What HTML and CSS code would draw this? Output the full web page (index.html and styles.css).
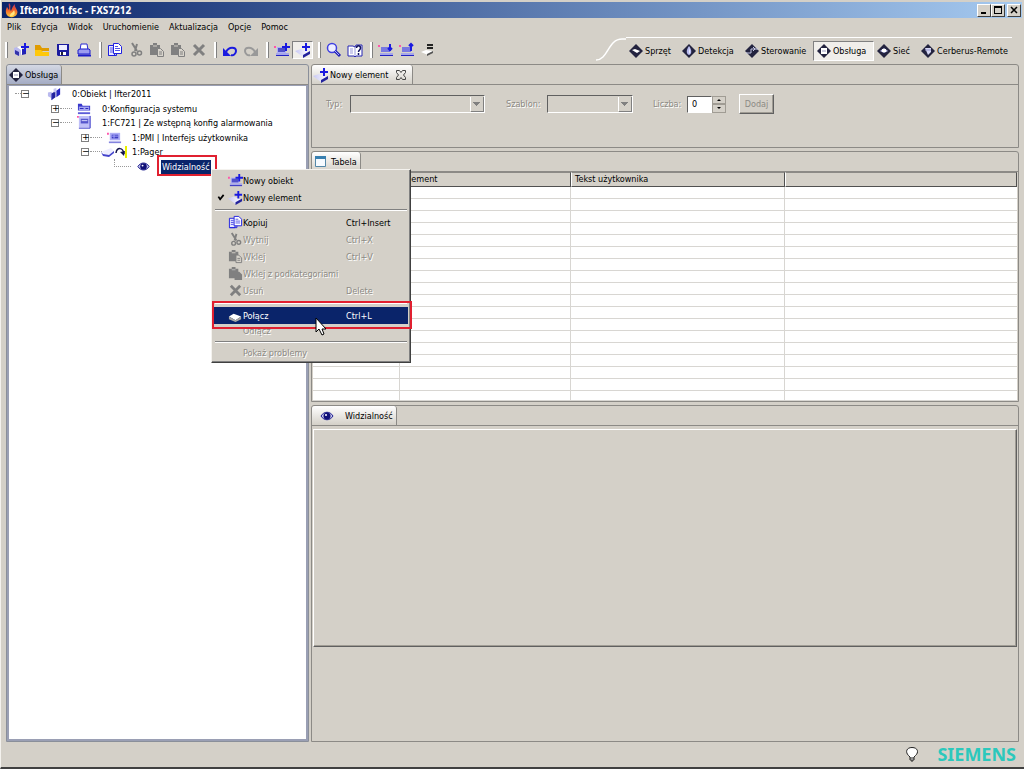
FILE: index.html
```html
<!DOCTYPE html>
<html lang="pl">
<head>
<meta charset="utf-8">
<title>Ifter2011.fsc - FXS7212</title>
<link rel="stylesheet" href="styles.css">
</head>
<body>
<svg class="defs" aria-hidden="true">
  <defs>
    <linearGradient id="flame" x1="0" y1="0" x2="0" y2="1"><stop offset="0" stop-color="#b0306a"/><stop offset=".5" stop-color="#f0602a"/><stop offset="1" stop-color="#ffd23a"/></linearGradient>
    <linearGradient id="slab" x1="0" y1="0" x2="1" y2="0"><stop offset="0" stop-color="#c6c6f4"/><stop offset="1" stop-color="#fff"/></linearGradient>
  </defs>
  <symbol id="app" viewBox="0 0 16 16"><path d="M5 1c3 3 0 5 2 8 1-2 1-4 4-7-1 4 4 6 2 10-2 4-8 4-10 1S2 7 3 5c1 1 1 2 2 3 1-3-1-4 0-7z" fill="url(#flame)"/><path d="M6 14c0-3 3-3 4-6 2 4 0 6-4 6z" fill="#ffe680"/></symbol>
  <symbol id="new" viewBox="0 0 16 16"><path d="M1 6l3-1 4 3v5l-3 1-4-3z" fill="#b9b9ee"/><path d="M4 5l3-1 2 2v6l-1 1V8z" fill="#fff"/><path d="M2 8l4 2v4l-4-2z" fill="#33a"/><path d="M9 7l4 0v5l-4 1z" fill="#2222b4"/><path d="M12 1v8M8 5h8" stroke="#1a1ae0" stroke-width="2"/></symbol>
  <symbol id="cubes" viewBox="0 0 16 16"><path d="M1 7l4-1v7l-4-2z" fill="#b9b9ee"/><path d="M5 8l4-3v7l-4 3z" fill="#20209c"/><path d="M7 3l3-1v4l-3 1z" fill="#c8c8f2"/><path d="M10 5l4-3v7l-4 3z" fill="#2525c0"/><path d="M5 8v7" stroke="#55c"/></symbol>
  <symbol id="open" viewBox="0 0 16 16"><path d="M1 3h5l2 3h7v3H1z" fill="#e09c00"/><path d="M1 8h6l2 2h6v4H1z" fill="#ffc80a"/></symbol>
  <symbol id="save" viewBox="0 0 16 16"><path d="M2 2h12v12H3l-1-1z" fill="#1c1c9e"/><path d="M4 3h8v5H4z" fill="#eef"/><path d="M5 10h6v3H5z" fill="#fff"/><path d="M6 10h2v3H6z" fill="#223"/></symbol>
  <symbol id="print" viewBox="0 0 16 16"><path d="M5 2h6l1 6H4z" fill="#fff" stroke="#2b2bd4"/><path d="M2 8l2-1h9l1 1v4H2z" fill="#9c9cf0" stroke="#1d1dcc"/><path d="M2 13.500h13" stroke="#1d1dcc" stroke-width="2"/></symbol>
  <symbol id="copy" viewBox="0 0 16 16"><path d="M1.500 3.500h6v10h-6z" fill="#e8e8ff" stroke="#2020e0"/><path d="M3 6h3M3 8h3M3 10h3" stroke="#5555e8"/><path d="M6.500 1.500h5l3 3v7h-8z" fill="#fff" stroke="#2020e0"/><path d="M8 4.500h3M8 6.500h5M8 8.500h5" stroke="#5555e8"/><path d="M1.500 13.500h8v-2" fill="none" stroke="#2020e0"/></symbol>
  <symbol id="cut" viewBox="0 0 16 16"><path d="M4 1l5 8M9 2L7 9" stroke="#808080" stroke-width="2"/><circle cx="6" cy="12" r="2" fill="none" stroke="#808080" stroke-width="1.500"/><circle cx="11.500" cy="11" r="2" fill="none" stroke="#808080" stroke-width="1.500"/></symbol>
  <symbol id="paste" viewBox="0 0 16 16"><path d="M1 3h3V1h4v2h3v10H1z" fill="#808080"/><path d="M4 4h4" stroke="#d4d0c8"/><path d="M8.500 6.500h3l3 3v5h-6z" fill="#d8d4cc" stroke="#808080"/><path d="M10 10h3M10 12h3" stroke="#808080"/></symbol>
  <symbol id="pastesub" viewBox="0 0 16 16"><path d="M1 3h3V1h4v2h3v3h1l3 3v6H7v-2H1z" fill="#808080"/><path d="M4 4h4" stroke="#bbb"/></symbol>
  <symbol id="del" viewBox="0 0 16 16"><path d="M3 3l10 10M13 3L3 13" stroke="#808080" stroke-width="3"/></symbol>
  <symbol id="undo" viewBox="0 0 16 16"><path d="M4 10c3-6 10-5 10-1 0 3-3 5-5 4" fill="none" stroke="#1a1ae0" stroke-width="2"/><path d="M1 6v8h8z" fill="#1a1ae0"/></symbol>
  <symbol id="redo" viewBox="0 0 16 16"><path d="M12 10C9 4 2 5 2 9c0 3 3 5 5 4" fill="none" stroke="#999" stroke-width="2"/><path d="M15 6v8H7z" fill="#999"/></symbol>
  <symbol id="screen" viewBox="0 0 16 16"><path d="M0 3h2v2H0z" fill="#f5a"/><path d="M3 3h11v8H3z" fill="#aeaef6"/><path d="M5 5h7v4H5z" fill="#3c3cc0"/><path d="M5 6.500h7M7.500 5v4" stroke="#aaf"/><path d="M2 12h13v1H2z" fill="#a7a7e8"/><path d="M2 13h13v1H2z" fill="#6a6ad8"/></symbol>
  <symbol id="newobj" viewBox="0 0 16 16"><path d="M0 4h2v2H0z" fill="#f5a"/><path d="M3 5h9v6H3z" fill="#aeaef6"/><path d="M4 6h7v4H4z" fill="#5050c8"/><path d="M2 11h13v2H2z" fill="#a7a7e8"/><path d="M2 13h13v1H2z" fill="#2222c4"/><path d="M12 1v8M8 5h8" stroke="#1a1ae0" stroke-width="2"/></symbol>
  <symbol id="newel" viewBox="0 0 16 16"><path d="M0 9l6-2 8 3-6 5z" fill="url(#slab)"/><path d="M8 13l7-4v3l-7 4z" fill="#22229c"/><path d="M11 1v8M7 5h8" stroke="#1a1ae0" stroke-width="2"/></symbol>
  <symbol id="zoom" viewBox="0 0 16 16"><circle cx="6" cy="6" r="4.500" fill="#eef" stroke="#4040e0" stroke-width="1.500"/><path d="M9 9l5 5" stroke="#2222b4" stroke-width="3"/><path d="M9 9l4 4" stroke="#aaf"/></symbol>
  <symbol id="help" viewBox="0 0 16 16"><path d="M1 4h5l2 1 1-2h6v11H9l-1 1-1-1H1z" fill="#fff" stroke="#2626b4"/><path d="M8 5v9M3 7h3M3 9h3M3 11h3" stroke="#99d"/><path d="M9.500 6c0-3 4-3 4 0 0 2-2 2-2 4m0 1v2" fill="none" stroke="#101060" stroke-width="1.500"/></symbol>
  <symbol id="import" viewBox="0 0 16 16"><path d="M0 3h2v2H0z" fill="#f5a"/><path d="M3 5h9v5H3z" fill="#7878e0"/><path d="M2 11h13v2H2z" fill="#a7a7e8"/><path d="M2 13h13v1H2z" fill="#2222c4"/><path d="M12 2v7M10 6l2 2 2-2" fill="none" stroke="#1a1ae0" stroke-width="2"/></symbol>
  <symbol id="export" viewBox="0 0 16 16"><path d="M0 3h2v2H0z" fill="#f5a"/><path d="M3 5h9v5H3z" fill="#7878e0"/><path d="M2 11h13v2H2z" fill="#a7a7e8"/><path d="M2 13h13v1H2z" fill="#2222c4"/><path d="M12 9V2M10 4l2-2 2 2" fill="none" stroke="#1a1ae0" stroke-width="2"/></symbol>
  <symbol id="equal" viewBox="0 0 16 16"><path d="M1 10l5-2 7 1-5 4z" fill="#fff"/><path d="M7 12l6-3v2l-6 3z" fill="#555"/><path d="M7 3h6M7 6h6" stroke="#222" stroke-width="2"/></symbol>
  <symbol id="diamond" viewBox="0 0 16 16"><path d="M8 1l7 7-7 7-7-7z" fill="#23233f"/></symbol>
  <symbol id="p-hw" viewBox="0 0 16 16"><use href="#diamond"/><path d="M4 7l3-1 5 2-3 2z" fill="#fff"/></symbol>
  <symbol id="p-det" viewBox="0 0 16 16"><use href="#diamond"/><path d="M8 3c3 4 3 8 0 9-3-1-3-5 0-9z" fill="#b9bcf0"/><path d="M8 5c1 3 1 5 0 6z" fill="#fff"/></symbol>
  <symbol id="p-ctl" viewBox="0 0 16 16"><use href="#diamond"/><path d="M2 10h5V6h7M9 4l2 2-2 2" fill="none" stroke="#c8cbe8"/></symbol>
  <symbol id="p-op" viewBox="0 0 16 16"><use href="#diamond"/><path d="M4 5h8v6H4z" fill="#23233f"/><path d="M5 5h6v6H5z" fill="#fff"/><path d="M6 7h4v2H6z" fill="#ccd"/></symbol>
  <symbol id="p-net" viewBox="0 0 16 16"><use href="#diamond"/><path d="M4 8l4-3 4 3-4 2z" fill="#c2c6ee"/><path d="M6 6h4v3H6z" fill="#fff"/></symbol>
  <symbol id="p-rem" viewBox="0 0 16 16"><use href="#diamond"/><path d="M5 5h6v4l-3 3z" fill="#d4d6f4"/><path d="M5 7h6" stroke="#99c"/></symbol>
  <symbol id="folder" viewBox="0 0 16 16"><path d="M1 3h4l1 2h8v5H1z" fill="#3838cc"/><path d="M2 6h11v4H2z" fill="#a6a6f2"/><path d="M3 8h4M9 8h3" stroke="#2222b8"/><path d="M1 12h13v2H1z" fill="#5c5cd8"/></symbol>
  <symbol id="panel" viewBox="0 0 16 16"><path d="M0 1h2v2H0z" fill="#f5a"/><path d="M2 1h12v12H2z" fill="#c0c0f8"/><path d="M14 1v13H2" fill="none" stroke="#2929c4"/><path d="M4 4h8v5H4z" fill="#5656cc"/><path d="M5 6h6" stroke="#ddf"/></symbol>
  <symbol id="pager" viewBox="0 0 28 14"><path d="M1 7l10-4 3 3-5 5z" fill="#eef"/><path d="M1 7l2 2 6 1 5-4v2l-5 4-6-1z" fill="#4343cc"/><path d="M16 8c1-6 7-6 8 1" fill="none" stroke="#15154c" stroke-width="1.500"/><path d="M20 7l4 4 1-5z" fill="#15154c"/><path d="M26 1v12" stroke="#eaf000" stroke-width="2"/></symbol>
  <symbol id="eye" viewBox="0 0 16 16"><path d="M2 8c3-5 9-5 12 0-3 5-9 5-12 0z" fill="#c4c4ee" stroke="#1c1c8c"/><circle cx="8" cy="8" r="3.500" fill="#101078"/><circle cx="7" cy="7" r="1" fill="#fff"/></symbol>
  <symbol id="table" viewBox="0 0 16 16"><path d="M2.500 2.500h10v10h-10z" fill="#f5faff" stroke="#5387a8"/><path d="M2 2h11v3H2z" fill="#3980b0"/></symbol>
  <symbol id="close" viewBox="0 0 16 16"><path d="M3.500 3.500h3L8 5.500l1.500-2h3v2L10.500 8l2 2.500v2h-3L8 10.500l-1.500 2h-3v-2l2-2.500-2-2.500z" fill="none" stroke="#444"/></symbol>
  <symbol id="link" viewBox="0 0 16 16"><path d="M1 9l5-3 8 3-6 4z" fill="#fff"/><path d="M1 9v3l7 3 6-3V9l-6 4z" fill="#aaa8a4"/></symbol>
  <symbol id="bulb" viewBox="0 0 16 16"><path d="M8 1.500c6 0 7 5 3.500 8L10 11v3H6v-3L4.500 9.500C1 6 2.500 1.500 8 1.500z" fill="#fff" stroke="#222"/><path d="M6 12h4M7 15h2" stroke="#222"/></symbol>
  <symbol id="check" viewBox="0 0 16 16"><path d="M5 7l2 3 4-5" fill="none" stroke="#000" stroke-width="2"/></symbol>
</svg>

<header class="titlebar">
  <svg class="icon"><use href="#app"/></svg>
  <h1>Ifter2011.fsc - FXS7212</h1>
  <div class="winbtns">
    <button class="winbtn" aria-label="Minimalizuj"><svg viewBox="0 0 8 8"><path d="M1 6h5v2H1z"/></svg></button>
    <button class="winbtn" aria-label="Maksymalizuj"><svg viewBox="0 0 8 8"><path d="M0 0h8v8H0zM1 2v5h6V2z" fill-rule="evenodd"/></svg></button>
    <button class="winbtn last" aria-label="Zamknij"><svg viewBox="0 0 8 8"><path d="M1 1l6 6M7 1L1 7" stroke="#000" stroke-width="1.500"/></svg></button>
  </div>
</header>

<nav class="menubar">
  <button>Plik</button><button>Edycja</button><button>Widok</button><button>Uruchomienie</button><button>Aktualizacja</button><button>Opcje</button><button>Pomoc</button>
</nav>

<div class="toolbar">
  <div class="tools">
    <div class="group"><button aria-label="Nowy"><svg class="icon"><use href="#new"/></svg></button><button aria-label="Otwórz"><svg class="icon"><use href="#open"/></svg></button><button aria-label="Zapisz"><svg class="icon"><use href="#save"/></svg></button><button aria-label="Drukuj"><svg class="icon"><use href="#print"/></svg></button></div>
    <div class="group"><button aria-label="Kopiuj"><svg class="icon"><use href="#copy"/></svg></button><button aria-label="Wytnij"><svg class="icon"><use href="#cut"/></svg></button><button aria-label="Wklej"><svg class="icon"><use href="#paste"/></svg></button><button aria-label="Wklej z podkategoriami"><svg class="icon"><use href="#paste"/></svg></button><button aria-label="Usuń"><svg class="icon"><use href="#del"/></svg></button></div>
    <div class="group"><button aria-label="Cofnij"><svg class="icon"><use href="#undo"/></svg></button><button aria-label="Ponów"><svg class="icon"><use href="#redo"/></svg></button></div>
    <div class="group"><button aria-label="Nowy obiekt"><svg class="icon"><use href="#newobj"/></svg></button><button class="pressed" aria-label="Nowy element"><svg class="icon"><use href="#newel"/></svg></button></div>
    <div class="group"><button aria-label="Szukaj"><svg class="icon"><use href="#zoom"/></svg></button><button aria-label="Pomoc"><svg class="icon"><use href="#help"/></svg></button></div>
    <div class="group"><button aria-label="Importuj"><svg class="icon"><use href="#import"/></svg></button><button aria-label="Eksportuj"><svg class="icon"><use href="#export"/></svg></button><button aria-label="Porównaj"><svg class="icon"><use href="#equal"/></svg></button></div>
  </div>
  <svg class="curve" viewBox="0 0 30 24"><path d="M0 22C12 22 12 1 26 1h4" fill="none" stroke="#fff" stroke-width="1.500"/></svg>
  <nav class="perspectives">
    <button><svg class="icon"><use href="#p-hw"/></svg>Sprzęt</button>
    <button><svg class="icon"><use href="#p-det"/></svg>Detekcja</button>
    <button><svg class="icon"><use href="#p-ctl"/></svg>Sterowanie</button>
    <button class="pressed"><svg class="icon"><use href="#p-op"/></svg>Obsługa</button>
    <button><svg class="icon"><use href="#p-net"/></svg>Sieć</button>
    <button><svg class="icon"><use href="#p-rem"/></svg>Cerberus-Remote</button>
  </nav>
</div>

<main class="workspace">
  <section class="side">
    <div class="tabs"><button class="tab blue"><svg class="icon"><use href="#p-op"/></svg>Obsługa</button></div>
    <ul class="tree">
      <li class="l0"><i class="dots short"></i><button class="toggle" aria-label="Zwiń">−</button><svg class="icon"><use href="#cubes"/></svg><span>0:Obiekt | Ifter2011</span></li>
      <li class="l1"><button class="toggle" aria-label="Rozwiń">+</button><i class="dots"></i><svg class="icon"><use href="#folder"/></svg><span>0:Konfiguracja systemu</span></li>
      <li class="l1"><button class="toggle" aria-label="Zwiń">−</button><i class="dots"></i><svg class="icon"><use href="#panel"/></svg><span>1:FC721 | Ze wstępną konfig alarmowania</span></li>
      <li class="l2"><button class="toggle" aria-label="Rozwiń">+</button><i class="dots"></i><svg class="icon"><use href="#screen"/></svg><span>1:PMI | Interfejs użytkownika</span></li>
      <li class="l2"><button class="toggle" aria-label="Zwiń">−</button><i class="dots"></i><svg class="icon wide"><use href="#pager"/></svg><span>1:Pager</span></li>
      <li class="l3"><i class="dots corner"></i><svg class="icon"><use href="#eye"/></svg><span class="selected">Widzialność</span></li>
    </ul>
  </section>

  <div class="content">
    <section class="pane">
      <div class="tabs"><button class="tab">
        <svg class="icon"><use href="#newel"/></svg>Nowy element<svg class="icon x"><use href="#close"/></svg></button></div>
      <form class="form">
        <label class="lt" for="typ">Typ:</label><select id="typ" class="typ" disabled></select>
        <label class="ls" for="szablon">Szablon:</label><select id="szablon" class="szablon" disabled></select>
        <label class="ll" for="liczba">Liczba:</label><span class="spin"><input id="liczba" value="0"><span class="arrows"><button type="button" aria-label="Więcej"><svg viewBox="0 0 6 4"><path d="M1 3l2-2 2 2z"/></svg></button><button type="button" aria-label="Mniej"><svg viewBox="0 0 6 4"><path d="M1 1l2 2 2-2z"/></svg></button></span></span>
        <button class="add" type="button" disabled>Dodaj</button>
      </form>
    </section>

    <section class="pane">
      <div class="tabs"><button class="tab table-tab"><svg class="icon"><use href="#table"/></svg>Tabela</button></div>
      <table class="grid">
        <colgroup><col class="c1"><col class="c2"><col class="c3"><col></colgroup>
        <thead><tr><th></th><th>Element</th><th>Tekst użytkownika</th><th></th></tr></thead>
        <tbody>
          <tr><td></td><td></td><td></td><td></td></tr><tr><td></td><td></td><td></td><td></td></tr><tr><td></td><td></td><td></td><td></td></tr>
          <tr><td></td><td></td><td></td><td></td></tr><tr><td></td><td></td><td></td><td></td></tr><tr><td></td><td></td><td></td><td></td></tr>
          <tr><td></td><td></td><td></td><td></td></tr><tr><td></td><td></td><td></td><td></td></tr><tr><td></td><td></td><td></td><td></td></tr>
          <tr><td></td><td></td><td></td><td></td></tr><tr><td></td><td></td><td></td><td></td></tr><tr><td></td><td></td><td></td><td></td></tr>
          <tr><td></td><td></td><td></td><td></td></tr><tr><td></td><td></td><td></td><td></td></tr><tr><td></td><td></td><td></td><td></td></tr>
          <tr><td></td><td></td><td></td><td></td></tr><tr><td></td><td></td><td></td><td></td></tr><tr class="end"><td></td><td></td><td></td><td></td></tr>
        </tbody>
      </table>
    </section>

    <section class="pane detail">
      <div class="tabs"><button class="tab vis"><svg class="icon"><use href="#eye"/></svg>Widzialność</button></div>
      <div class="canvas"></div>
    </section>
  </div>
</main>

<footer class="status"><svg class="icon"><use href="#bulb"/></svg><strong>SIEMENS</strong></footer>

<div class="mark sel-mark"></div>
<div class="popup" role="menu">
  <button><svg class="icon tick"></svg><svg class="icon"><use href="#newobj"/></svg><span>Nowy obiekt</span></button>
  <button><svg class="icon tick"><use href="#check"/></svg><svg class="icon"><use href="#newel"/></svg><span>Nowy element</span></button>
  <hr>
  <button><svg class="icon tick"></svg><svg class="icon"><use href="#copy"/></svg><span>Kopiuj</span><kbd>Ctrl+Insert</kbd></button>
  <button disabled><svg class="icon tick"></svg><svg class="icon"><use href="#cut"/></svg><span>Wytnij</span><kbd>Ctrl+X</kbd></button>
  <button disabled><svg class="icon tick"></svg><svg class="icon"><use href="#paste"/></svg><span>Wklej</span><kbd>Ctrl+V</kbd></button>
  <button disabled><svg class="icon tick"></svg><svg class="icon"><use href="#pastesub"/></svg><span>Wklej z podkategoriami</span></button>
  <button disabled><svg class="icon tick"></svg><svg class="icon"><use href="#del"/></svg><span>Usuń</span><kbd>Delete</kbd></button>
  <hr>
  <button class="active"><svg class="icon tick"></svg><svg class="icon"><use href="#link"/></svg><span>Połącz</span><kbd>Ctrl+L</kbd></button>
  <button class="short" disabled><svg class="icon tick"></svg><svg class="icon"></svg><span>Odłącz</span></button>
  <hr>
  <button class="short" disabled><svg class="icon tick"></svg><svg class="icon"></svg><span>Pokaż problemy</span></button>
</div>
<div class="mark item-mark"></div>
<svg class="cursor" viewBox="0 0 12 20"><path d="M1 1v14l3-3 3 6 2-1-2-5h4z" fill="#fff" stroke="#000"/></svg>
</body>
</html>
```
FILE: styles.css
```css
* { box-sizing: border-box; }
body {
  margin: 0; min-height: 100vh; display: flex; flex-direction: column;
  background: #d4d0c8; color: #000; border-bottom: 2px solid #404040; border-left: 1px solid #f4f2ee;
  padding-top: 2px;
  font: 9px/14px "DejaVu Sans Condensed", "Noto Sans", sans-serif;
}
button, input, select { font: inherit; color: inherit; margin: 0; padding: 0; border-radius: 0; }
button { background: none; border: 0; white-space: nowrap; }
.defs { position: absolute; width: 0; height: 0; }
.icon { width: 16px; height: 16px; flex: none; display: block; }

.titlebar { display: flex; align-items: center; height: 16px; margin-left: 1px; margin-right: 2px; padding: 0 1px 0 2px; background: linear-gradient(90deg, #0a246a, #a6caf0); }
.titlebar h1 { flex: 1; margin: 0; font: bold 10px/14px "Noto Sans", sans-serif; color: #fff; }
.winbtns { display: flex; }
.winbtn { width: 14px; height: 13px; display: grid; place-items: center; background: #d4d0c8; border: 1px solid; border-color: #fff #404040 #404040 #fff; }
.winbtn svg { width: 8px; height: 8px; }
.winbtn.last { margin-left: 2px; }

.menubar { display: flex; gap: 10px; height: 17px; padding-left: 6px; align-items: center; }

.toolbar { display: flex; height: 29px; align-items: center; padding-right: 12px; }
.tools { display: flex; flex: 1; padding-left: 4px; }
.group { display: flex; align-items: center; }
.group::before { content: ""; width: 2px; height: 16px; margin-right: 2px; background: #fff; border-right: 1px solid #808080; }
.group:not(:last-child) { padding-right: 5px; }
.group button { width: 21px; height: 18px; display: grid; place-items: center; }
.pressed { background: #f0eeea; border: 1px solid; border-color: #808080 #fff #fff #808080; }
.curve { width: 30px; height: 24px; flex: none; }
.perspectives { display: grid; grid-template-columns: 53px 63px 71px 61px 44px 94px; height: 26px; padding-top: 3px; border-top: 1px solid #fff; }
.perspectives button { display: flex; align-items: center; gap: 1px; height: 20px; padding-left: 2px; }

.workspace { flex: 1; display: grid; grid-template-columns: 303px 1fr; gap: 2px; padding: 0 5px; }
.side { display: flex; flex-direction: column; border: 1px solid #8a8f9a; border-radius: 3px 3px 0 0; }
.tabs { display: flex; height: 20px; border-bottom: 1px solid #8c8a86; }
.tab { display: flex; align-items: center; gap: 1px; height: 19px; padding: 0 3px 0 1px; background: linear-gradient(#fff, #d4d0c8); border-right: 1px solid #8c8a86; border-radius: 3px 3px 0 0; }
.tab.blue { background: linear-gradient(#d4d8e4, #a4acc4); }
.tab .x { margin-left: 4px; }
.tree { flex: 1; margin: 0; padding: 0; list-style: none; background: #fff; border: 2px solid #9a9fb4; border-top-width: 1px; display: grid; grid-auto-rows: 15px 14px; align-content: start; }
.tree li { display: flex; align-items: center; height: 15px; white-space: nowrap; }
.tree .icon { width: 15px; height: 15px; margin-right: 10px; }
.l0 { padding-left: 6px; }
.l0 .toggle { margin-right: 18px; }
.l1 { padding-left: 42px; }
.l2 { padding-left: 72px; }
.l3 { padding-left: 105px; }
.toggle { width: 8px; height: 8px; border: 1px solid #808080; font: 9px/5px "DejaVu Sans", sans-serif; flex: none; }
.dots { width: 12px; border-top: 1px dotted #999; margin: 0 5px 0 1px; flex: none; }
.dots.short { width: 6px; margin: 0; }
.dots.corner { width: 17px; height: 8px; border-top: 0; border-bottom: 1px dotted #999; border-left: 1px dotted #999; align-self: flex-start; margin: 0 5px 0 0; }
.l2 .wide { width: 28px; height: 14px; margin: 0 4px 0 -7px; }
.tree .selected { background: #0a246a; color: #fff; padding: 0 1px; }

.content { display: flex; flex-direction: column; gap: 3px; min-width: 0; }
.pane { border: 1px solid #8c8a86; border-radius: 3px 3px 0 0; }
.form { display: flex; align-items: center; height: 62px; padding: 0 14px 24px; color: #8c8a84; text-shadow: 1px 1px #fff; }
.form label { flex: none; }
.lt { width: 24px; }
.ls { width: 41px; }
.ll { width: 34px; }
.form select { appearance: none; height: 18px; border: 1px solid; border-color: #606060 #fff #fff #606060; opacity: 1;
  background-color: #d4d0c8;
  background-image: linear-gradient(135deg, #808080 50%, transparent 50%), linear-gradient(225deg, #808080 50%, transparent 50%), linear-gradient(#808080, #808080), linear-gradient(#808080, #808080), linear-gradient(#fff, #fff);
  background-size: 4px 4px, 4px 4px, 1px 14px, 13px 1px, 1px 14px; background-position: right 3px top 6px, right 7px top 6px, right 0 top 1px, right 0 bottom 0, right 13px top 1px; background-repeat: no-repeat; }
.typ { width: 135px; margin-right: 21px; }
.szablon { width: 86px; margin-right: 20px; }
.spin { display: flex; margin-right: 13px; height: 17px; }
.spin input { width: 25px; border: 1px solid; border-color: #606060 #fff #fff #606060; background: #fff; color: #000; padding-left: 4px; }
.arrows { display: grid; grid-template-rows: 1fr 1fr; width: 14px; }
.arrows button { display: grid; place-items: center; border: 1px solid #a09c94; }
.arrows svg { width: 6px; height: 4px; }
.add { width: 35px; height: 20px; border: 1px solid; border-color: #fff #606060 #606060 #fff; box-shadow: inset -1px -1px #a09c94; }

.grid { width: calc(100% - 2px); margin: 0 1px; table-layout: fixed; border-collapse: separate; border-spacing: 0; background: #fff; }
.c1 { width: 87px; } .c2 { width: 171px; } .c3 { width: 214px; }
.grid th { height: 15px; padding: 0 3px; line-height: 13px; font-weight: normal; text-align: left; background: #d4d0c8; border: 1px solid; border-color: #8c8a86 #505050 #505050 #fff; }
.grid td { height: 12px; padding: 0; border-bottom: 1px solid #d8d6d2; border-right: 1px solid #d8d6d2; }
.grid .end td { height: 10px; }
.grid td:last-child { border-right: 0; }
.table-tab .icon { margin-right: 1px; }

.detail { flex: 1; }
.vis { padding-left: 7px; gap: 10px; }
.canvas { height: 218px; margin: 3px 1px; border: 1px solid; border-color: #fff #606060 #606060 #fff; box-shadow: inset -1px -1px #a09c94; }

.status { display: flex; align-items: center; justify-content: flex-end; gap: 17px; height: 25px; padding: 0 8px 2px 0; }
.status strong { color: #2bc8bc; font: bold 18px/22px "Noto Sans", sans-serif; }

.popup { position: absolute; left: 211px; top: 169px; width: 200px; padding: 2px; background: #d4d0c8; border: 1px solid; border-color: #f4f2ee #404040 #404040 #f4f2ee; box-shadow: inset -1px -1px #808080; }
.popup button { display: flex; align-items: center; width: 100%; height: 17px; text-align: left; }
.popup button.short { height: 14px; }
.popup .icon { width: 15px; height: 15px; }
.popup .tick { width: 14px; }
.popup kbd { font: inherit; width: 62px; margin-left: auto; }
.popup button:disabled { color: #8c8a84; text-shadow: 1px 1px #fff; }
.popup hr { height: 2px; margin: 3px 1px; border: 0; border-top: 1px solid #808080; border-bottom: 1px solid #fff; }
.popup .active { background: #0a246a; color: #fff; }
.mark { position: absolute; border: 2px solid #e02030; }
.sel-mark { left: 157px; top: 155px; width: 60px; height: 21px; }
.item-mark { left: 212px; top: 301px; width: 200px; height: 28px; }
.cursor { position: absolute; left: 315px; top: 317px; width: 12px; height: 20px; }
```
